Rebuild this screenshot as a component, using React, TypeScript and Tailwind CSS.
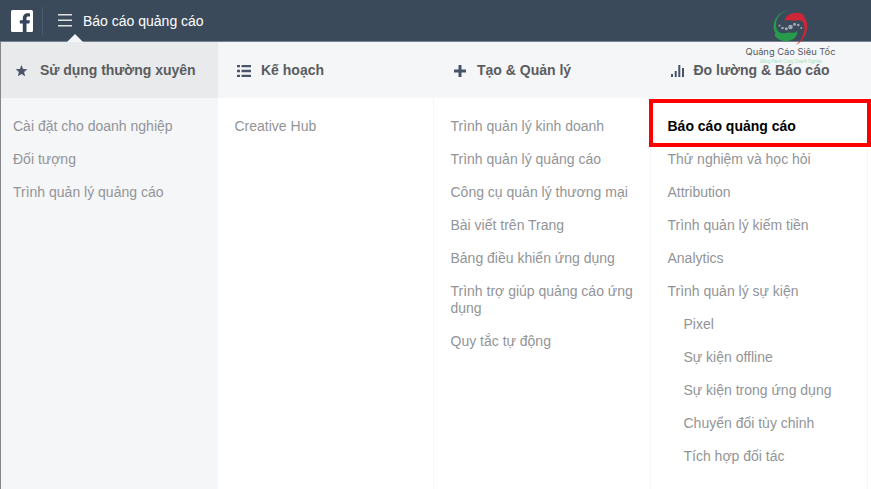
import type { ReactNode } from "react";

type Item = { label: string; nested?: boolean; active?: boolean };

function MenuItem({ label, nested, active }: Item) {
  const tone = active ? "font-bold text-black" : "text-[#929497]";
  return <li className={`${tone} ${nested ? "pl-4" : ""}`}>{label}</li>;
}

function Column({
  icon,
  title,
  items,
  headClass,
  bodyClass,
  listClass,
}: {
  icon: ReactNode;
  title: string;
  items: Item[];
  headClass: string;
  bodyClass: string;
  listClass: string;
}) {
  return (
    <section className="flex h-full flex-col">
      <h2
        className={`flex h-14 shrink-0 items-center text-sm font-bold whitespace-nowrap text-[#5a5c60] ${headClass}`}
      >
        {icon}
        <span>{title}</span>
      </h2>
      <ul
        className={`flex grow flex-col gap-4 pt-5 text-sm leading-[17px] ${bodyClass} ${listClass}`}
      >
        {items.map((item) => (
          <MenuItem key={item.label} {...item} />
        ))}
      </ul>
    </section>
  );
}

const StarIcon = (
  <svg className="mr-[12px] h-[13px] w-[13px]" viewBox="0 0 14 13" fill="#4b5468">
    <path d="M7 .6 8.700 4.900l4.600.300-3.500 3 1.100 4.500L7 10.200l-3.900 2.500 1.100-4.500-3.500-3 4.600-.300z" />
  </svg>
);

const ListIcon = (
  <svg className="mt-[2px] mr-[10px] h-3 w-[14px]" viewBox="0 0 14 12" fill="#4b5468">
    <path d="M0 0h3v2.300H0zM4.500 0H14v2.300H4.500zM0 4.800h3v2.400H0zM4.500 4.800H14v2.400H4.500zM0 9.700h3V12H0zM4.500 9.700H14V12H4.500z" />
  </svg>
);

const PlusIcon = (
  <svg className="mt-[2px] mr-[11px] h-3 w-3" viewBox="0 0 12 12" fill="#46536a">
    <path d="M4.500 0h3v4.500H12v3H7.500V12h-3V7.500H0v-3h4.500z" />
  </svg>
);

const BarsIcon = (
  <svg className="mt-[2px] mr-[9.500px] h-3 w-[13px]" viewBox="0 0 13 12" fill="#46536a">
    <path d="M0 9h2v3H0zM3.700 6h2v6h-2zM7.300 0h2v12h-2zM11 3h2v9h-2z" />
  </svg>
);

function Watermark() {
  return (
    <div className="absolute top-[5px] left-[740px] h-[60px] w-[100px]">
      <svg className="h-[60px] w-[100px]" viewBox="740 5 100 60">
        <path
          fill="#279a4c"
          d="M791 9.300C780 11 773.500 18.500 773.500 27c0 3 .800 4.500 2 6-.500 1-.700 2-.300 3.500C779 41 785 42 790 40.500c4.500-1.300 7.300-4.500 7.500-9.500-2.500 2-5 2-7.500 1.500-4-.500-6.500 1.500-9.500.500-4.500-2-5.500-8-3.500-13.500 2-5 7-8.500 14-10.200z"
        />
        <path
          fill="#cf2637"
          d="M784.500 20.500c1.300-4.500 6.500-7.700 12.500-7.700 3.500 0 5.800 1.200 7 3 .500 1 .300 1.700.800 2.500 2 2.800 2.700 6 2.200 10.200-.800 7-4.500 12.500-10.800 16.500 4.800-5 8.300-10.500 8.300-17 0-4.300-1.800-7.300-5-7.700-3-.300-4.500 1-7.500.200-2.700-.700-4.800-.800-7.500 0z"
        />
        <g fill="#a1a9b2">
          <circle cx="779.500" cy="25.500" r="1" />
          <circle cx="782.500" cy="28" r="1.300" />
          <circle cx="786.300" cy="28.700" r="1.500" />
          <circle cx="790.500" cy="27" r="2.300" />
          <circle cx="794.500" cy="24.200" r="1.500" />
          <circle cx="798.300" cy="25" r="1.300" />
          <circle cx="801.300" cy="28" r="1" />
        </g>
        <text
          x="745.500"
          y="54.500"
          textLength="90"
          lengthAdjust="spacingAndGlyphs"
          fontFamily="Inter, 'DejaVu Sans', sans-serif"
          fontSize="9"
          fill="#55585d"
        >
          Quảng Cáo Siêu Tốc
        </text>
        <text
          x="760"
          y="63"
          textLength="62"
          lengthAdjust="spacingAndGlyphs"
          fontFamily="'Liberation Sans', sans-serif"
          fontSize="5"
          fill="#9ee4b8"
        >
          Đồng Hành Cùng Doanh Nghiệp
        </text>
      </svg>
    </div>
  );
}

export default function App() {
  return (
    <div className="relative flex h-[489px] w-[871px] flex-col overflow-hidden bg-white font-['Liberation_Sans',Arial,sans-serif]">
      <header className="flex h-[42px] shrink-0 items-center border-b border-[#778390] bg-[#3b4a5b]">
        <svg className="ml-[11px] h-[22px] w-[22px]" viewBox="0 0 22 22">
          <rect width="22" height="22" rx="1.500" fill="#fff" />
          <path
            fill="#34445b"
            d="M11.800 22v-8.500H8.800v-3.200h3V8.200C11.800 5.200 13.500 3.200 16.500 3.200c1.300 0 2 .100 2.500.200v3h-1.700c-1.400 0-1.800.700-1.800 1.700v2.200h3.400l-.500 3.200h-2.900V22z"
          />
        </svg>
        <div className="ml-[9px] h-7 w-px bg-[#4b5a6d]" />
        <svg className="ml-[15px] h-[13px] w-[14px]" viewBox="0 0 14 13" fill="#dde1e6">
          <path d="M0 0h14v1.500H0zM0 5.500h14V7H0zM0 11h14v1.500H0z" />
        </svg>
        <span className="ml-[11px] text-sm text-white">Báo cáo quảng cáo</span>
      </header>

      <main className="grid grow grid-cols-[217px_216px_217px_217px_3px] border-l border-[#85868a]">
        <Column
          icon={StarIcon}
          title="Sử dụng thường xuyên"
          headClass="bg-[#e9eaeb] pl-[14px] tracking-[-0.04px]"
          bodyClass="bg-[#f5f6f8]"
          listClass="pl-3"
          items={[
            { label: "Cài đặt cho doanh nghiệp" },
            { label: "Đối tượng" },
            { label: "Trình quản lý quảng cáo" },
          ]}
        />
        <Column
          icon={ListIcon}
          title="Kế hoạch"
          headClass="bg-[#f5f6f8] pl-[19px]"
          bodyClass="border-r border-[#f6f6f7]"
          listClass="pl-[16.5px]"
          items={[{ label: "Creative Hub" }]}
        />
        <Column
          icon={PlusIcon}
          title="Tạo & Quản lý"
          headClass="bg-[#f5f6f8] pl-[20px]"
          bodyClass="border-r border-[#f6f6f7]"
          listClass="pr-3 pl-[16.5px]"
          items={[
            { label: "Trình quản lý kinh doanh" },
            { label: "Trình quản lý quảng cáo" },
            { label: "Công cụ quản lý thương mại" },
            { label: "Bài viết trên Trang" },
            { label: "Bảng điều khiển ứng dụng" },
            { label: "Trình trợ giúp quảng cáo ứng dụng" },
            { label: "Quy tắc tự động" },
          ]}
        />
        <Column
          icon={BarsIcon}
          title="Đo lường & Báo cáo"
          headClass="bg-[#f5f6f8] pl-[20px]"
          bodyClass="border-r border-[#f6f6f7]"
          listClass="pl-[16.5px]"
          items={[
            { label: "Báo cáo quảng cáo", active: true },
            { label: "Thử nghiệm và học hỏi" },
            { label: "Attribution" },
            { label: "Trình quản lý kiếm tiền" },
            { label: "Analytics" },
            { label: "Trình quản lý sự kiện" },
            { label: "Pixel", nested: true },
            { label: "Sự kiện offline", nested: true },
            { label: "Sự kiện trong ứng dụng", nested: true },
            { label: "Chuyển đổi tùy chỉnh", nested: true },
            { label: "Tích hợp đối tác", nested: true },
          ]}
        />
        <div className="h-14 bg-[#f5f6f8]" />
      </main>

      <svg className="absolute top-[34px] left-[67px] h-2 w-4" viewBox="0 0 16 8" fill="#f4f5f6">
        <path d="M0 8 8 0l8 8z" />
      </svg>
      <div className="absolute top-[99px] left-[649px] h-[48px] w-[222px] border-4 border-[#fe0000]" />
      <Watermark />
    </div>
  );
}
